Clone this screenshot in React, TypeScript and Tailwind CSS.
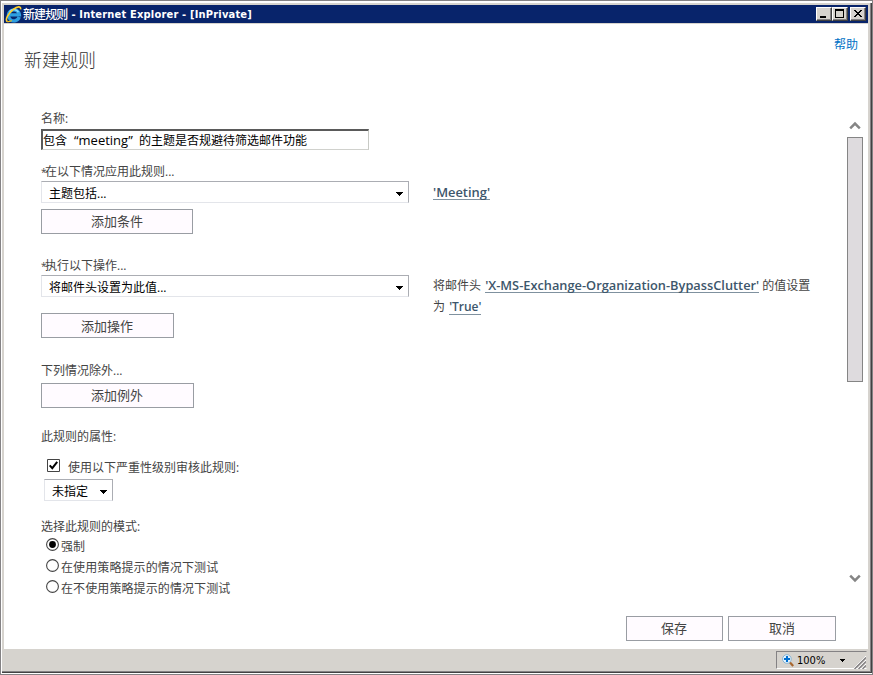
import type { ReactNode } from "react";

function Label({ children, className = "" }: { children: ReactNode; className?: string }) {
  return <div className={`h-5 whitespace-nowrap leading-[22px] text-[#444] ${className}`}>{children}</div>;
}

function Required() {
  return <span className="inline-block w-1 text-[10px] leading-none">*</span>;
}

function PushButton({ children, className = "" }: { children: ReactNode; className?: string }) {
  return (
    <button type="button" className={`block h-[25px] shrink-0 border border-[#999da3] bg-[#fffbff] text-center text-[13px] leading-[23px] text-[#444] ${className}`}>
      {children}
    </button>
  );
}

function Caret() {
  return (
    <svg width="7" height="4" viewBox="0 0 7 4" shapeRendering="crispEdges" className="shrink-0">
      <path d="M0 0h7v1h-1v1h-1v1h-1v1h-1v-1h-1v-1h-1v-1h-1z" fill="#000" />
    </svg>
  );
}

function Select({ children, className = "" }: { children: ReactNode; className?: string }) {
  return (
    <div className={`flex h-[22px] items-center justify-between border border-t-[#abadb3] border-r-[#abadb3] border-b-[#e3e5ea] border-l-[#e3e5ea] bg-white pr-[5px] pl-[7px] text-black ${className}`}>
      <span className="whitespace-nowrap pt-[3px] leading-5">{children}</span>
      <span className="pt-1"><Caret /></span>
    </div>
  );
}

function Radio({ children, checked = false }: { children: ReactNode; checked?: boolean }) {
  return (
    <div className="flex h-[21px] items-start pl-[5px] text-[#444]">
      <svg width="13" height="13" viewBox="0 0 13 13" className="mt-[2px] shrink-0">
        <circle cx="6.5" cy="6.5" r="5.9" fill="#fff" stroke="#444" strokeWidth="1.1" />
        {checked && <circle cx="6.5" cy="6.5" r="3.4" fill="#000" />}
      </svg>
      <span className="ml-[2px] whitespace-nowrap leading-[22px] tracking-[0.1px]">{children}</span>
    </div>
  );
}

function WindowButton({ d, className = "" }: { d: string; className?: string }) {
  return (
    <button type="button" className={`h-[14px] w-4 border border-t-white border-r-[#404040] border-b-[#404040] border-l-white bg-[#d6d3ce] shadow-[inset_-1px_-1px_0_#848284] ${className}`}>
      <svg width="14" height="12" viewBox="0 0 14 12" shapeRendering="crispEdges" className="block">
        <path d={d} fill="#000" />
      </svg>
    </button>
  );
}

function Logo() {
  return (
    <svg width="17" height="17" viewBox="0 0 17 17" className="shrink-0">
      <path d="M14.2 11A5.5 5.5 0 1 1 14.4 8.8H5" fill="none" stroke="#2e9fe0" strokeWidth="3.3" />
      <path d="M13.4 6.2A5.2 5.2 0 0 0 4.6 5.6" fill="none" stroke="#8bdcff" strokeWidth="1.5" />
      <path d="M2.5 15.6C-.6 14.2 3.3 7.3 8.3 3.4C12.3.2 16.2-.1 15.6 3.3" fill="none" stroke="#ffd02b" strokeWidth="1.6" />
      <path d="M2.2 15.5c1.2.6 3-.2 4.5-1.1" fill="none" stroke="#f2b90e" strokeWidth="1.2" />
    </svg>
  );
}

function Arrow({ down = false }: { down?: boolean }) {
  return (
    <svg width="12" height="9" viewBox="0 0 12 9" className="shrink-0">
      <path d={down ? "M1.2 1.7L6 6.5l4.8-4.8" : "M1.2 7.3L6 2.5l4.8 4.8"} fill="none" stroke="#858585" strokeWidth="2.5" />
    </svg>
  );
}

function Link({ children, className = "text-[12.8px]" }: { children: ReactNode; className?: string }) {
  return <a className={`inline-block h-[15px] border-b border-[#7f919f] font-['Open_Sans','Noto_Sans_CJK_SC',sans-serif] leading-[14px] font-semibold text-[#3d566b] ${className}`}>{children}</a>;
}

export default function App() {
  return (
    <div className="h-[675px] w-[873px] overflow-hidden border border-[#848284] bg-white pt-[2px] pb-px pl-px font-['Open_Sans','Noto_Sans_CJK_SC',sans-serif] text-[12px]">
      <div className="flex h-[670px] flex-col border-r border-b border-[#424142] bg-[#d6d3ce]">
        <div className="flex h-full flex-col border-r border-b border-[#848284] pt-[2px] pr-[2px] pl-[2px]">
          <header className="flex h-[18px] shrink-0 items-center bg-[#08246b] pr-[2px] pl-px">
            <Logo />
            <span className="ml-[1px] text-[12px] leading-[18px] whitespace-nowrap text-white font-['Noto_Sans_CJK_SC',sans-serif] font-medium tracking-[-0.9px]">新建规则</span>
            <span className="ml-[4px] pt-px text-[11px] leading-[18px] font-bold tracking-[0.19px] whitespace-nowrap text-white font-['DejaVu_Sans_Condensed','DejaVu_Sans',sans-serif] [font-stretch:condensed]">- Internet Explorer - [InPrivate]</span>
            <div className="ml-auto flex">
              <WindowButton d="M3 8h6v2H3z" />
              <WindowButton d="M2 1h9v9H2zM3 3v6h7V3z" />
              <WindowButton className="ml-[2px]" d="M3 2h2v1h1v1h2V3h1V2h2v1h-1v1H9v1H8v1h1v1h1v1h1v1H9V8H8V7H6v1H5v1H3V8h1V7h1V6h1V5H5V4H4V3H3z" />
            </div>
          </header>

          <main className="mt-px flex h-[625px] shrink-0 flex-col bg-white">
            <div className="flex h-[84px] shrink-0 justify-between pr-[10px] pl-5">
              <h1 className="pt-[23px] text-[18px] leading-6 font-light text-[#333] font-['Noto_Sans_CJK_SC',sans-serif]">新建规则</h1>
              <a className="pt-[11px] leading-5 text-[#0072c6]">帮助</a>
            </div>
            <div className="flex h-[508px] shrink-0 pl-[37px]">
              <form className="w-[368px] shrink-0">
                <Label>名称:</Label>
                <div className="mt-px flex h-[21px] w-[328px] border border-t-2 border-l-2 border-t-[#5a5a5a] border-r-[#c8cac5] border-b-[#d0d1cd] border-l-[#5a5a5a] bg-white leading-[20px] whitespace-nowrap text-black">
                  包含<span className="ml-[7px] text-[13px] leading-[19px]">“meeting”</span><span className="ml-auto mr-[61px]">的主题是否规避待筛选邮件功能</span>
                </div>
                <Label className="mt-[11px]"><Required />在以下情况应用此规则...</Label>
                <Select>主题包括...</Select>
                <PushButton className="mt-[6px] w-[152px]">添加条件</PushButton>
                <Label className="mt-[21px]"><Required />执行以下操作...</Label>
                <Select>将邮件头设置为此值...</Select>
                <PushButton className="mt-4 w-[133px] pt-px pr-px">添加操作</PushButton>
                <Label className="mt-[22px]">下列情况除外...</Label>
                <PushButton className="mt-[3px] w-[153px] pr-px">添加例外</PushButton>
                <Label className="mt-[18px]">此规则的属性:</Label>
                <div className="mt-[11px] flex h-5 items-start pl-[6px] text-[#444]">
                  <svg width="13" height="13" viewBox="0 0 13 13" className="mt-[2px] shrink-0">
                    <path d="M.5.5h12v12H.5z" fill="#fff" stroke="#444" />
                    <path d="M2.7 6.3L5.3 9.2L10.2 2.9" fill="none" stroke="#000" strokeWidth="2" />
                  </svg>
                  <span className="ml-2 leading-[22px] whitespace-nowrap">使用以下严重性级别审核此规则:</span>
                </div>
                <Select className="mt-[2px] ml-[3px] w-[69px]">未指定</Select>
                <Label className="mt-[15px]">选择此规则的模式:</Label>
                <Radio checked>强制</Radio>
                <Radio>在使用策略提示的情况下测试</Radio>
                <Radio>在不使用策略提示的情况下测试</Radio>
              </form>
              <aside className="ml-6 w-[390px] shrink-0 pt-[74px] leading-[21px] text-[#444]">
                <div className="h-[21px]"><Link className="text-[12.9px]">'Meeting'</Link></div>
                <div className="mt-[72px] whitespace-nowrap">
                  <div className="h-[21px]">将邮件头 <Link className="ml-px text-[12.8px]">'X-MS-Exchange-Organization-BypassClutter'</Link> 的值设置</div>
                  <div className="h-[21px]">为 <Link className="ml-px text-[12px]">'True'</Link></div>
                </div>
              </aside>
              <div className="ml-auto flex h-[475px] w-4 flex-col items-center pt-[13px] mr-[5px]">
                <Arrow />
                <div className="mt-[7px] h-[245px] w-4 shrink-0 border border-[#858585] bg-[#dedbde]" />
                <div className="mt-auto"><Arrow down /></div>
              </div>
            </div>
            <div className="flex justify-end gap-[5px] pr-8">
              <PushButton className="w-[97px] pr-px">保存</PushButton>
              <PushButton className="w-[108px]">取消</PushButton>
            </div>
          </main>

          <footer className="flex h-[22px] shrink-0 items-start justify-end pt-[2px] pr-px">
            <div className="flex h-[18px] w-[91px] items-center border border-t-[#848284] border-r-transparent border-b-white border-l-[#848284] pl-[5px]">
              <svg width="12" height="13" viewBox="0 0 12 13" className="shrink-0">
                <path d="M8 8.5l3.2 3.4" stroke="#a8662e" strokeWidth="2.2" />
                <circle cx="4.9" cy="5" r="4.3" fill="#e7f6ff" stroke="#87b4d4" />
                <path d="M5 2v6M2 5h6" stroke="#006fd0" strokeWidth="2.1" />
              </svg>
              <span className="ml-[3px] w-[38px] pt-px text-[11px] leading-4 text-black font-['DejaVu_Sans_Condensed','DejaVu_Sans',sans-serif] [font-stretch:condensed]">100%</span>
              <svg width="5" height="3" viewBox="0 0 5 3" shapeRendering="crispEdges" className="ml-[5px] shrink-0"><path d="M0 0h5v1H4v1H3v1H2V2H1V1H0z" /></svg>
              <svg width="13" height="13" viewBox="0 0 13 13" className="mt-[4px] ml-auto shrink-0">
                <path d="M0 13L13 0M4 13l9-9M8 13l5-5" stroke="#fff" />
                <path d="M1.5 13L13 1.5M5.5 13L13 5.5M9.5 13L13 9.5" stroke="#848284" strokeWidth="1.5" />
              </svg>
            </div>
          </footer>
        </div>
      </div>
    </div>
  );
}
